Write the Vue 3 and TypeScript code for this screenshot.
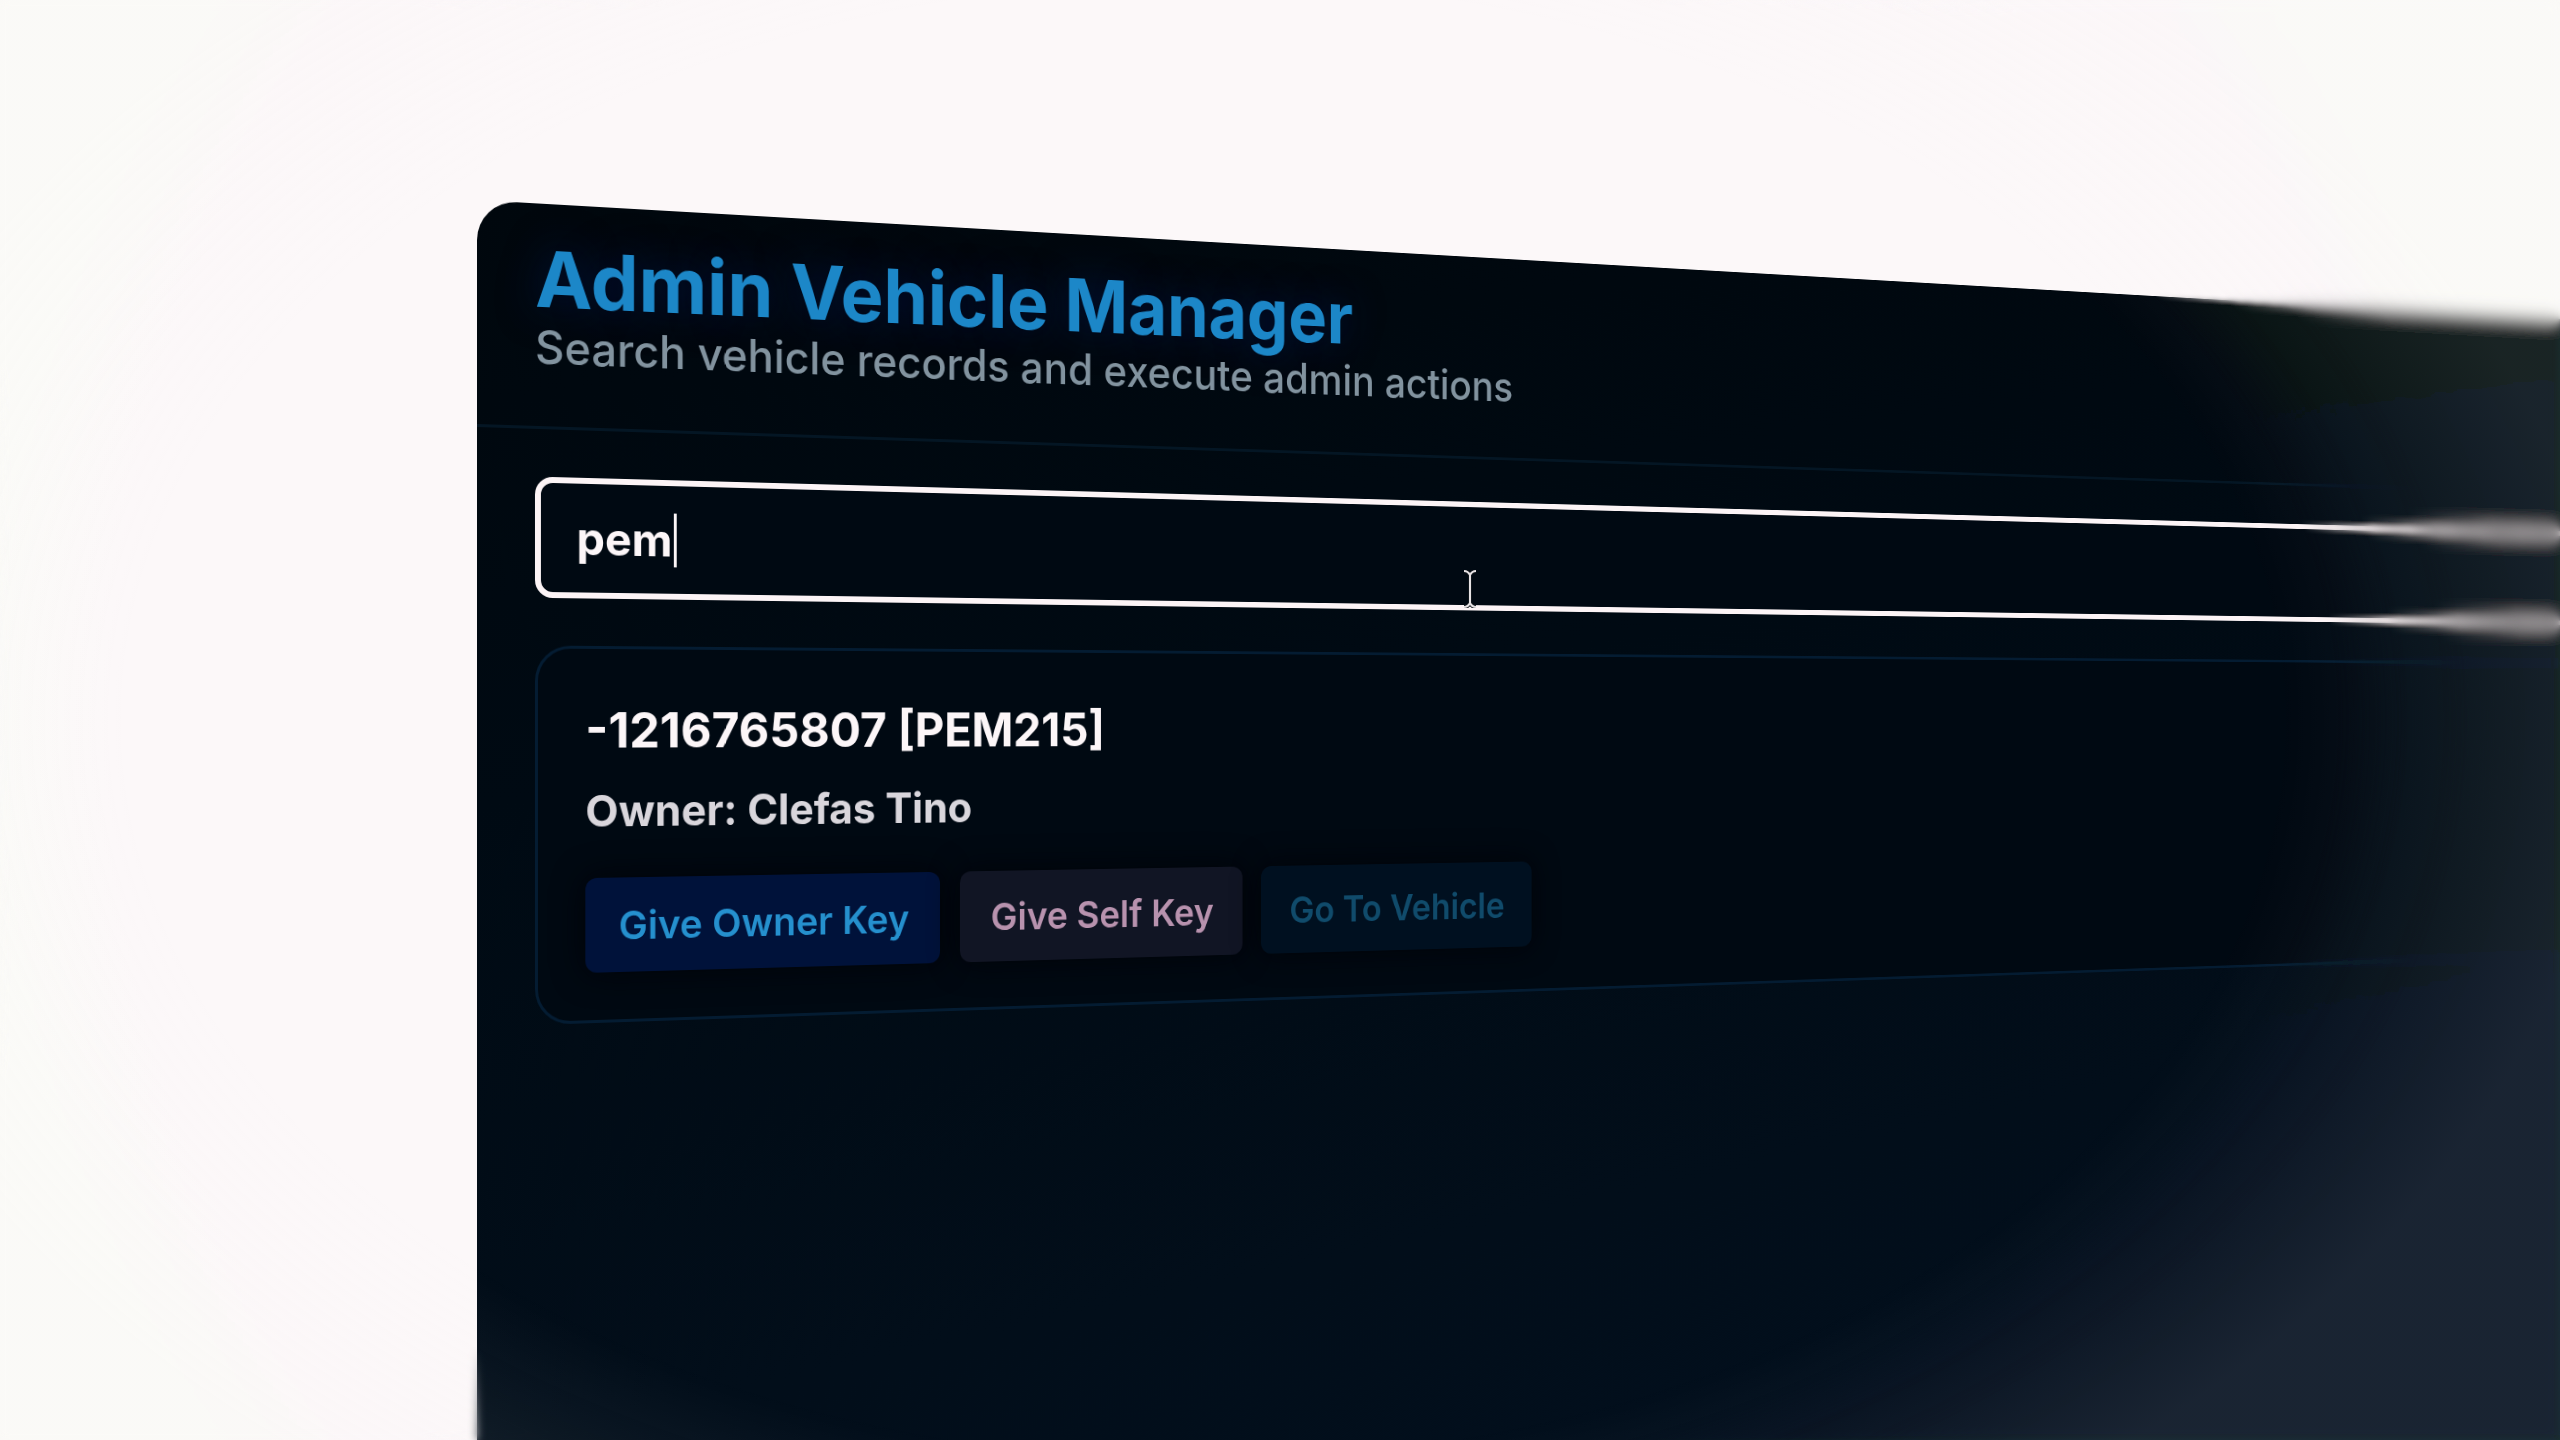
<script setup lang="ts">
import { ref } from 'vue'

interface VehicleAction {
  id: string
  label: string
  disabled: boolean
}

interface VehicleRecord {
  model: string
  plate: string
  owner: string
  actions: VehicleAction[]
}

const query = ref('pem')

const records: VehicleRecord[] = [
  {
    model: '-1216765807',
    plate: 'PEM215',
    owner: 'Clefas Tino',
    actions: [
      { id: 'give', label: 'Give Owner Key', disabled: false },
      { id: 'self', label: 'Give Self Key', disabled: false },
      { id: 'goto', label: 'Go To Vehicle', disabled: true },
    ],
  },
]
</script>

<template>
  <div class="scene">
    <svg class="filters" width="0" height="0" aria-hidden="true">
      <filter id="lens-soft"><feGaussianBlur stdDeviation="2" edgeMode="duplicate" /></filter>
      <filter id="lens-medium"><feGaussianBlur stdDeviation="4" edgeMode="duplicate" /></filter>
      <filter id="lens-strong"><feGaussianBlur stdDeviation="7" edgeMode="duplicate" /></filter>
    </svg>
    <div class="stage">
      <main class="panel">
        <header class="head">
          <h1 class="title">Admin Vehicle Manager</h1>
          <p class="subtitle">Search vehicle records and execute admin actions</p>
        </header>
        <section class="body">
          <div class="search">
            <input v-model="query" class="field" type="text" aria-label="Search vehicles" spellcheck="false" />
            <span class="caret" aria-hidden="true"></span>
          </div>
          <article v-for="record in records" :key="record.plate" class="card">
            <h2 class="name">{{ record.model }} [{{ record.plate }}]</h2>
            <p class="owner">Owner: {{ record.owner }}</p>
            <div class="actions">
              <button
                v-for="action in record.actions"
                :key="action.id"
                type="button"
                class="btn"
                :class="action.id"
                :disabled="action.disabled"
              >
                {{ action.label }}
              </button>
            </div>
          </article>
        </section>
      </main>
    </div>
    <div class="corner"></div>
    <div class="lens soft"></div>
    <div class="lens medium"></div>
    <div class="lens strong"></div>
    <div class="veil"></div>
    <svg class="pointer" viewBox="0 0 14 38" fill="none" aria-hidden="true">
      <path d="M1 1 Q5 1 7 5 Q9 1 13 1 M7 5 V33 M1 37 Q5 37 7 33 Q9 37 13 37" stroke="#10161c" stroke-width="4" />
      <path d="M1 1 Q5 1 7 5 Q9 1 13 1 M7 5 V33 M1 37 Q5 37 7 33 Q9 37 13 37" stroke="#e6e2e4" stroke-width="2" />
    </svg>
  </div>
</template>

<style>
body {
  margin: 0;
  overflow: hidden;
}
</style>

<style scoped>
.scene {
  position: relative;
  height: 100vh;
  overflow: hidden;
  background: radial-gradient(circle 1300px at 49% 50%, #fcf8f9 88%, #fbfbf8 98%);
  font-family: Inter, 'Liberation Sans', sans-serif;
}

.filters {
  position: absolute;
}

.stage {
  box-sizing: border-box;
  height: 100%;
  padding: 200px 0 0 477px;
  overflow: hidden;
  perspective: 3600px;
  perspective-origin: 50% 50%;
}

.panel {
  width: 120vw;
  height: 110vh;
  border-radius: 40px;
  background: linear-gradient(172deg, #00070d 0%, #000a13 30%, #020e1a 62%, #021020 100%);
  transform: rotateY(23.5deg);
  transform-origin: 0 50%;
}

.head {
  padding: 40px 58px 56px;
  border-bottom: 3px solid #041624;
}

.title {
  margin: 0 0 8px;
  font-size: 78px;
  line-height: 72px;
  font-weight: 700;
  color: #1c87c8;
  text-shadow: 0 0 40px #00123a;
}

.subtitle {
  margin: 0;
  font-size: 46px;
  line-height: 48px;
  font-weight: 500;
  color: #82939f;
}

.body {
  display: flex;
  flex-direction: column;
  gap: 48px;
  padding: 48px 58px;
}

.search {
  position: relative;
}

.field {
  display: block;
  box-sizing: border-box;
  width: 100%;
  height: 122px;
  padding: 0 36px;
  border: 6px solid #fcf4f6;
  border-radius: 18px;
  outline: none;
  background: #000912;
  color: #fcf6f8;
  font-family: inherit;
  font-size: 46px;
  font-weight: 700;
}

.caret {
  position: absolute;
  top: 34px;
  left: 142px;
  width: 3px;
  height: 55px;
  background: #fcf6f8;
}

.card {
  padding: 48px;
  border: 3px solid #041c32;
  border-radius: 36px;
  background: #000912;
}

.name {
  margin: 0 0 24px;
  font-size: 50px;
  line-height: 68px;
  font-weight: 700;
  color: #fcf6f8;
}

.owner {
  margin: 0 0 44px;
  font-size: 44px;
  line-height: 48px;
  font-weight: 700;
  color: #d9d6dc;
}

.actions {
  display: flex;
  gap: 22px;
}

.btn {
  height: 96px;
  padding: 0 34px;
  border: 0;
  border-radius: 12px;
  font-family: inherit;
  font-size: 40px;
  font-weight: 600;
  box-shadow: 0 0 32px #000308;
}

.btn.give {
  background: #00123a;
  color: #2590ce;
}

.btn.self {
  background: #111524;
  color: #b892ae;
}

.btn.goto {
  background: #001020;
  color: #104b6b;
}

.corner,
.lens,
.veil {
  position: absolute;
  inset: 0;
  pointer-events: none;
}

.corner {
  right: 50%;
  backdrop-filter: blur(4px);
  mask-image: radial-gradient(ellipse 1170px 800px at 94% 50%, transparent 100%, #000 112%);
}

.lens {
  left: 50%;
}

.lens.soft {
  backdrop-filter: url(#lens-soft);
  mask-image: radial-gradient(ellipse 1170px 800px at -6% 50%, transparent 97%, #000 103%);
}

.lens.medium {
  backdrop-filter: url(#lens-medium);
  mask-image: radial-gradient(ellipse 1170px 800px at -6% 50%, transparent 102%, #000 108%);
}

.lens.strong {
  backdrop-filter: url(#lens-strong);
  mask-image: radial-gradient(ellipse 1170px 800px at -6% 50%, transparent 106%, #000 113%);
}

.veil {
  background: radial-gradient(ellipse 1170px 800px at 47% 50%, rgba(250, 244, 246, 0) 92%, rgba(250, 244, 246, 0.1) 120%);
}

.pointer {
  position: absolute;
  top: 570px;
  left: 1463px;
  width: 14px;
  height: 38px;
}
</style>
